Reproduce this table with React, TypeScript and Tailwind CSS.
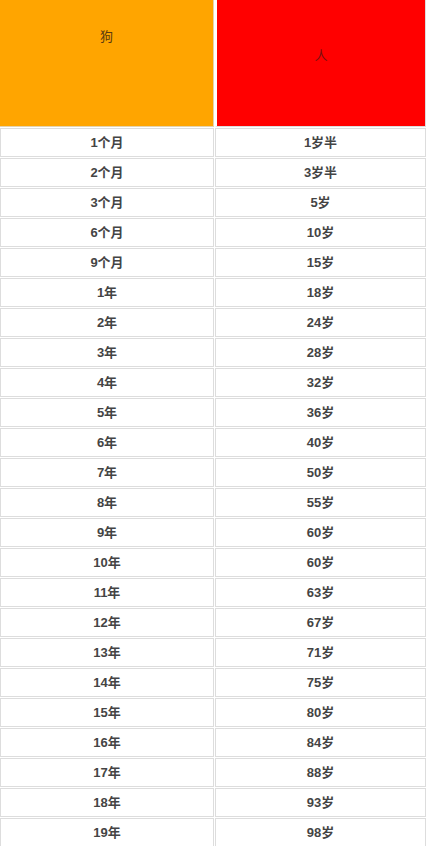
const rows: [string, string][] = [
  ['1个月', '1岁半'],
  ['2个月', '3岁半'],
  ['3个月', '5岁'],
  ['6个月', '10岁'],
  ['9个月', '15岁'],
  ['1年', '18岁'],
  ['2年', '24岁'],
  ['3年', '28岁'],
  ['4年', '32岁'],
  ['5年', '36岁'],
  ['6年', '40岁'],
  ['7年', '50岁'],
  ['8年', '55岁'],
  ['9年', '60岁'],
  ['10年', '60岁'],
  ['11年', '63岁'],
  ['12年', '67岁'],
  ['13年', '71岁'],
  ['14年', '75岁'],
  ['15年', '80岁'],
  ['16年', '84岁'],
  ['17年', '88岁'],
  ['18年', '93岁'],
  ['19年', '98岁'],
]

export default function App() {
  return (
    <div
      className="w-[426px] h-[846px] overflow-hidden bg-white text-[13px] text-[#444]"
      style={{ fontFamily: '"Liberation Sans", "Noto Sans CJK SC", sans-serif' }}
    >
      <div className="grid grid-cols-[214px_1fr] gap-x-[1px] gap-y-[1px]">
        {/* header */}
        <div className="h-[127px] bg-[#ffa500] border-r border-b border-[#e3d3b0] flex justify-center pt-[27px] text-[#5a3a10]">
          狗
        </div>
        <div className="h-[127px] bg-[#ff0000] border-b border-l-[2px] border-r border-[#ddd] border-l-white flex justify-center pt-[46px] text-[#7a1010]">
          人
        </div>

        {rows.map(([dog, human], i) => (
          <div key={i} className="contents">
            <div className="h-[29px] border border-[#dddddd] flex items-center justify-center font-bold">
              {dog}
            </div>
            <div className="h-[29px] border border-[#dddddd] flex items-center justify-center font-bold">
              {human}
            </div>
          </div>
        ))}
      </div>
    </div>
  )
}
